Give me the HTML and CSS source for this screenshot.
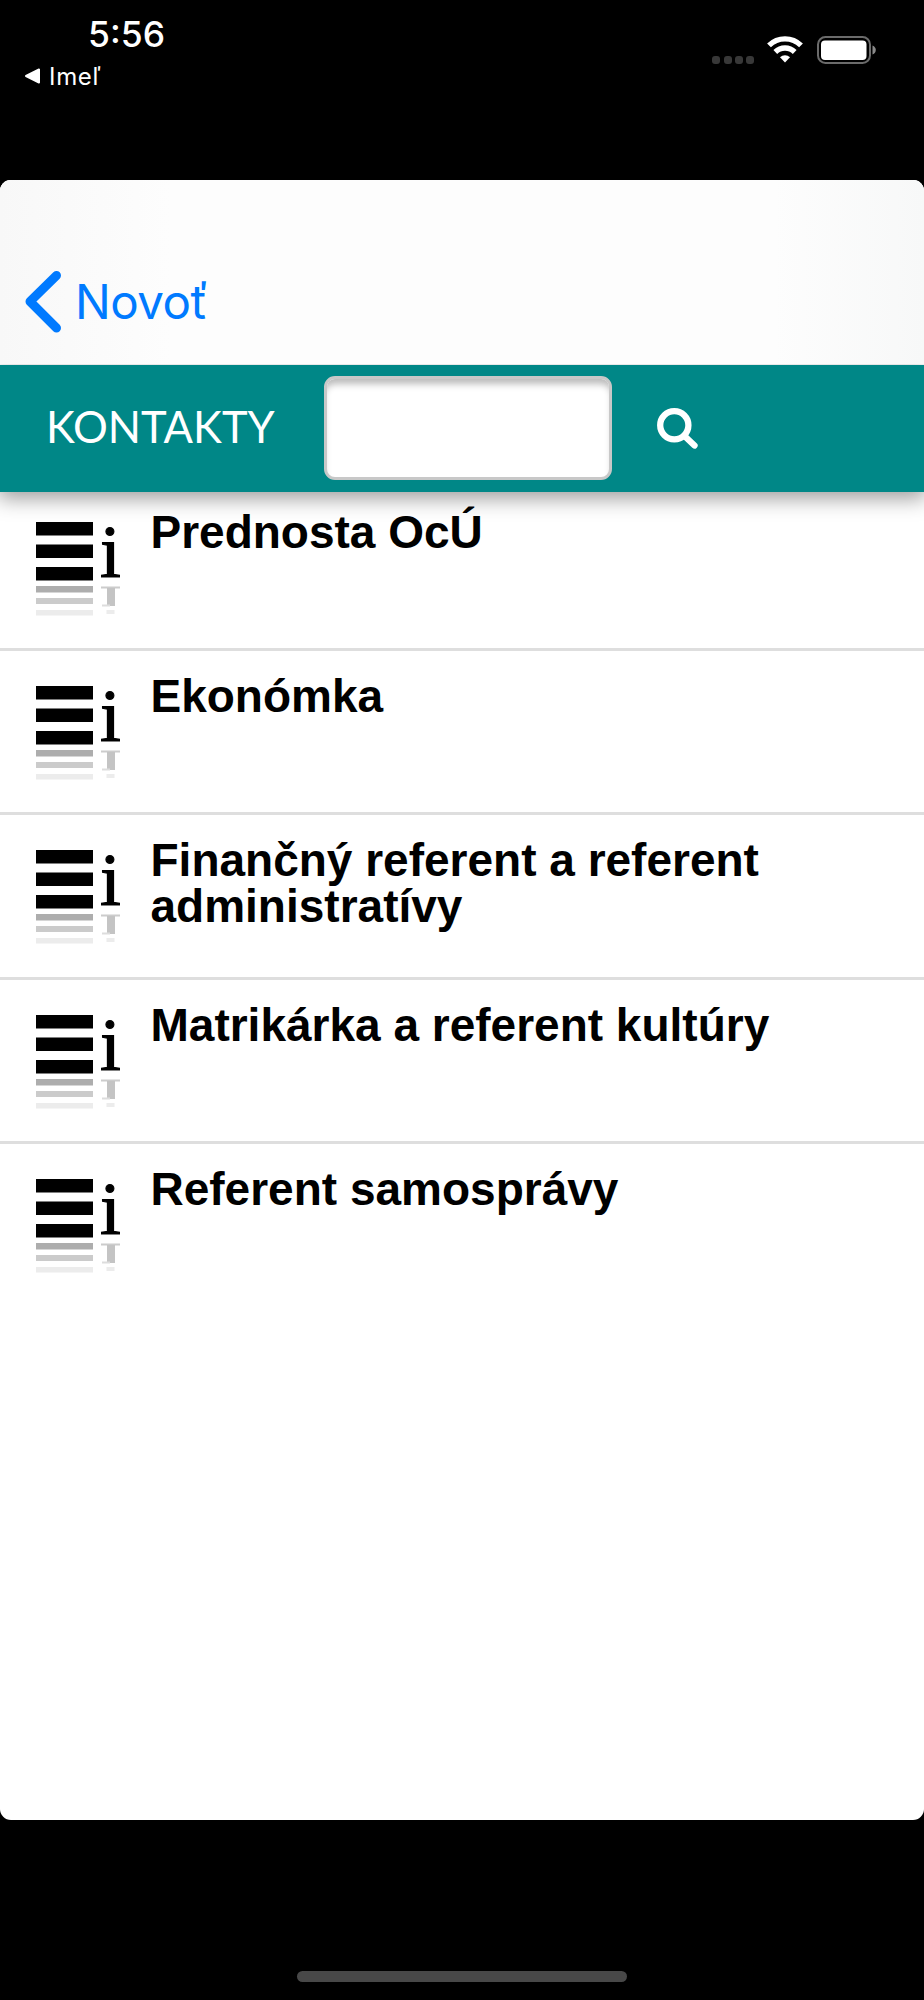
FILE: index.html
```html
<!DOCTYPE html>
<html lang="sk">
<head>
<meta charset="utf-8">
<title>Kontakty</title>
<link rel="stylesheet" href="styles.css">
</head>
<body>

<!-- bars and reflection of the row icon -->
<svg class="defs" width="0" height="0">
	<symbol id="list-info" viewBox="0 0 90 98">
		<rect x="1" y="1" width="57" height="13.500"/>
		<rect x="1" y="23.500" width="57" height="13.500"/>
		<rect x="1" y="46" width="57" height="13.500"/>
		<rect x="1" y="65" width="57" height="6.500" fill="#adadad"/>
		<rect x="1" y="77" width="57" height="6" fill="#cbcbcb"/>
		<rect x="1" y="89" width="57" height="5.500" fill="#ececec"/>
		<rect x="66" y="65.500" width="19" height="2" fill="#ccc"/>
		<rect x="72" y="67" width="8" height="18" fill="#c4c4c4"/>
		<rect x="67" y="83.500" width="8" height="2" fill="#ddd"/>
		<rect x="71.500" y="89" width="8" height="4" fill="#ececec"/>
	</symbol>
</svg>

<div class="status">
	<div class="status-left">
		<div class="time">5:56</div>
		<div class="back-app">
			<svg width="17" height="16" viewBox="0 0 17 16"><path d="M2 8L15 1.500V14.500Z" fill="#fff" stroke="#fff" stroke-width="2" stroke-linejoin="round"/></svg>
			<span>Imeľ</span>
		</div>
	</div>
	<div class="status-right">
		<div class="dots"><i></i><i></i><i></i><i></i></div>
		<svg class="wifi" width="36" height="27" viewBox="0 0 36 27" fill="none" stroke="#fff" stroke-width="5.400">
			<path d="M2 9.400A22.800 22.800 0 0 1 34 9.400"/>
			<path d="M8.300 16A13.900 13.900 0 0 1 27.700 16"/>
			<path d="M18 26.500L13 21.300A7.300 7.300 0 0 1 23 21.300Z" fill="#fff" stroke="none"/>
		</svg>
		<svg class="battery" width="60" height="28" viewBox="0 0 60 28">
			<rect x="1" y="1" width="52" height="26" rx="7.500" fill="none" stroke="#6b6b6b" stroke-width="2"/>
			<rect x="4" y="4.500" width="45.500" height="19.500" rx="4" fill="#fff"/>
			<path d="M55.500 9.500Q58.800 11 58.800 14Q58.800 17 55.500 18.500Z" fill="#8a8a8a"/>
		</svg>
	</div>
</div>

<div class="app">
	<div class="navbar">
		<svg width="37" height="62" viewBox="0 0 37 62"><path d="M32.500 4.500L6 30.500L32.500 57" fill="none" stroke="#007aff" stroke-width="9" stroke-linecap="round" stroke-linejoin="round"/></svg>
		<a class="back">Novoť</a>
	</div>

	<div class="header">
		<h1>KONTAKTY</h1>
		<input type="text" class="search">
		<svg width="42" height="42" viewBox="0 0 42 42" fill="none" stroke="#fff"><circle cx="18.300" cy="18.300" r="14.100" stroke-width="6.300"/><path d="M28.500 29L38.500 38.500" stroke-width="6.300" stroke-linecap="round"/></svg>
	</div>

	<ul class="list">
		<li><svg><use href="#list-info"/><text x="65" y="56">i</text></svg><span>Prednosta OcÚ</span></li>
		<li><svg><use href="#list-info"/><text x="65" y="56">i</text></svg><span>Ekonómka</span></li>
		<li><svg><use href="#list-info"/><text x="65" y="56">i</text></svg><span>Finančný referent a referent administratívy</span></li>
		<li><svg><use href="#list-info"/><text x="65" y="56">i</text></svg><span>Matrikárka a referent kultúry</span></li>
		<li><svg><use href="#list-info"/><text x="65" y="56">i</text></svg><span>Referent samosprávy</span></li>
	</ul>
</div>

<div class="home-bar"></div>

</body>
</html>
```
FILE: styles.css
```css
body{
	margin:0;
	height:2000px;
	background-color:#000;
	overflow:hidden;
	display:flex;
	flex-direction:column;
}
svg{
	display:block;
	flex:none;
}
.defs{
	position:absolute;
}

/* status bar */
.status{
	height:180px;
	flex:none;
	display:flex;
	justify-content:space-between;
	color:#fff;
	font-family:Inter,sans-serif;
}
.time{
	margin:13px 0 0 88px;
	font-size:35.500px;
	line-height:43px;
	font-weight:500;
}
.back-app{
	display:flex;
	align-items:center;
	gap:8px;
	margin:6px 0 0 24px;
	font-size:24px;
	line-height:30px;
	letter-spacing:.7px;
}
.back-app svg{
	margin-top:-2px;
}
.status-right{
	display:flex;
	align-items:flex-start;
	padding:36px 47px 0 0;
}
.dots{
	display:flex;
	gap:3.200px;
	margin:19.500px 13px 0 0;
}
.dots i{
	width:8px;
	height:8px;
	border-radius:3px;
	background-color:#383838;
}
.wifi{
	margin-right:14px;
}

/* app window */
.app{
	height:1640px;
	flex:none;
	background-color:#fff;
	border-radius:11px;
	overflow:hidden;
}
.navbar{
	height:184.500px;
	box-sizing:border-box;
	display:flex;
	padding:91px 0 0 24px;
	background:
		linear-gradient(90deg, #f8f8f8, rgba(253,253,253,0) 170px),
		linear-gradient(270deg, #f7f8f8, rgba(253,253,253,0) 150px),
		#fdfdfd;
}
.back{
	margin-left:14px;
	color:#007aff;
	font-family:Inter,sans-serif;
	font-size:47.500px;
	line-height:62px;
	letter-spacing:-.5px;
}
.header{
	height:127px;
	box-sizing:border-box;
	position:relative;
	display:flex;
	align-items:center;
	padding-left:46px;
	background-color:#008787;
	box-shadow:0 4px 20px 2px rgba(0,0,0,.4);
	clip-path:inset(0 0 -40px 0);
}
.header h1{
	width:277.500px;
	margin:-4px 0 0;
	color:#fff;
	font-family:Lato,sans-serif;
	font-size:43.500px;
	font-weight:400;
}
.search{
	width:288.500px;
	height:104px;
	box-sizing:border-box;
	margin:0 44px 0 0;
	border:3px solid #c8c8c8;
	border-radius:11px;
	background-color:#fff;
	box-shadow:inset 0 8px 7px -3px #bbb;
}
.list{
	list-style:none;
	margin:0;
	padding:0;
}
.list li{
	height:164.600px;
	box-sizing:border-box;
	display:flex;
	padding-top:34px;
	border-bottom:3px solid #dedede;
}
.list li:first-child{
	height:159px;
	padding-top:29px;
}
.list li:last-child{
	border-bottom:none;
}
.list svg{
	width:90px;
	height:98px;
	margin-left:35px;
}
.list text{
	font-family:"Liberation Serif",serif;
	font-size:75px;
	stroke:#000;
	stroke-width:1.200px;
}
.list span{
	width:700px;
	margin:-12px 0 0 25.500px;
	color:#000;
	font-family:"Liberation Sans",Arial,sans-serif;
	font-size:46px;
	font-weight:bold;
	line-height:46px;
}

.home-bar{
	width:330px;
	height:11px;
	margin:151px auto 0;
	border-radius:6px;
	background-color:#484848;
	flex:none;
}
```
